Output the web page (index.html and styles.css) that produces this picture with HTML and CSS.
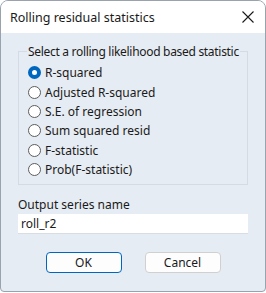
FILE: index.html
```
<!DOCTYPE html>
<html lang="en">
<head>
  <meta charset="UTF-8">
  <title>Rolling residual statistics</title>
  <link rel="stylesheet" href="styles.css">
</head>
<body>
  <div class="dialog">
    <div class="titlebar">
      <span class="title">Rolling residual statistics</span>
      <svg class="close" width="14" height="14" viewBox="0 0 14 14">
        <path d="M1.5 1.5 L12.5 12.5 M12.5 1.5 L1.5 12.5" stroke="#1a1a1a" stroke-width="1.1" fill="none"/>
      </svg>
    </div>

    <div class="content">
      <fieldset class="group">
        <legend>Select a rolling likelihood based statistic</legend>
        <label class="radio"><span class="dot checked"></span>R-squared</label>
        <label class="radio"><span class="dot"></span>Adjusted R-squared</label>
        <label class="radio"><span class="dot"></span>S.E. of regression</label>
        <label class="radio"><span class="dot"></span>Sum squared resid</label>
        <label class="radio"><span class="dot"></span>F-statistic</label>
        <label class="radio"><span class="dot"></span>Prob(F-statistic)</label>
      </fieldset>

      <div class="field">
        <div class="field-label">Output series name</div>
        <div class="textbox">roll_r2</div>
      </div>

      <div class="buttons">
        <div class="btn default">OK</div>
        <div class="btn">Cancel</div>
      </div>
    </div>
  </div>
</body>
</html>
```
FILE: styles.css
```
* {
  box-sizing: border-box;
}

body {
  margin: 0;
  width: 266px;
  height: 293px;
  background: #ffffff;
  font-family: "Noto Sans", "Open Sans", sans-serif;
  font-size: 12px;
  color: #1a1a1a;
}

.dialog {
  width: 266px;
  height: 292px;
  border: 1px solid #9aa3ad;
  border-radius: 8px 8px 4px 4px;
  background: #e6ecf3;
  overflow: hidden;
  display: flex;
  flex-direction: column;
}

.titlebar {
  height: 32px;
  background: #ffffff;
  display: flex;
  align-items: center;
  justify-content: space-between;
  padding: 0 10px 0 9px;
}

.title {
  font-size: 12.5px;
}

.content {
  padding: 10px 17px 0 17px;
  display: flex;
  flex-direction: column;
}

.group {
  margin: 0;
  border: 1px solid #d4dbe4;
  padding: 3px 0 0 9px;
  height: 142px;
  display: flex;
  flex-direction: column;
}

.group legend {
  padding: 0 1px;
  margin-left: -1px;
  white-space: nowrap;
  letter-spacing: -0.3px;
}

.radio {
  display: flex;
  align-items: center;
  height: 19.4px;
  gap: 4px;
}

.dot {
  width: 13px;
  height: 13px;
  border-radius: 50%;
  border: 1px solid #5c5c5c;
  background: #ffffff;
}

.dot.checked {
  border: 4px solid #0067c0;
}

.field {
  margin-top: 11px;
}

.field-label {
  height: 18px;
}

.textbox {
  height: 20px;
  background: #ffffff;
  border-bottom: 1px solid #d8dde3;
  padding: 1px 3px;
  line-height: 17px;
}

.buttons {
  display: flex;
  justify-content: center;
  gap: 23px;
  margin-top: 18px;
}

.btn {
  width: 76px;
  height: 21px;
  border: 1px solid #d0d0d0;
  border-radius: 4px;
  background: #fdfdfd;
  text-align: center;
  line-height: 19px;
}

.btn.default {
  border: 1px solid #0067c0;
}
```
